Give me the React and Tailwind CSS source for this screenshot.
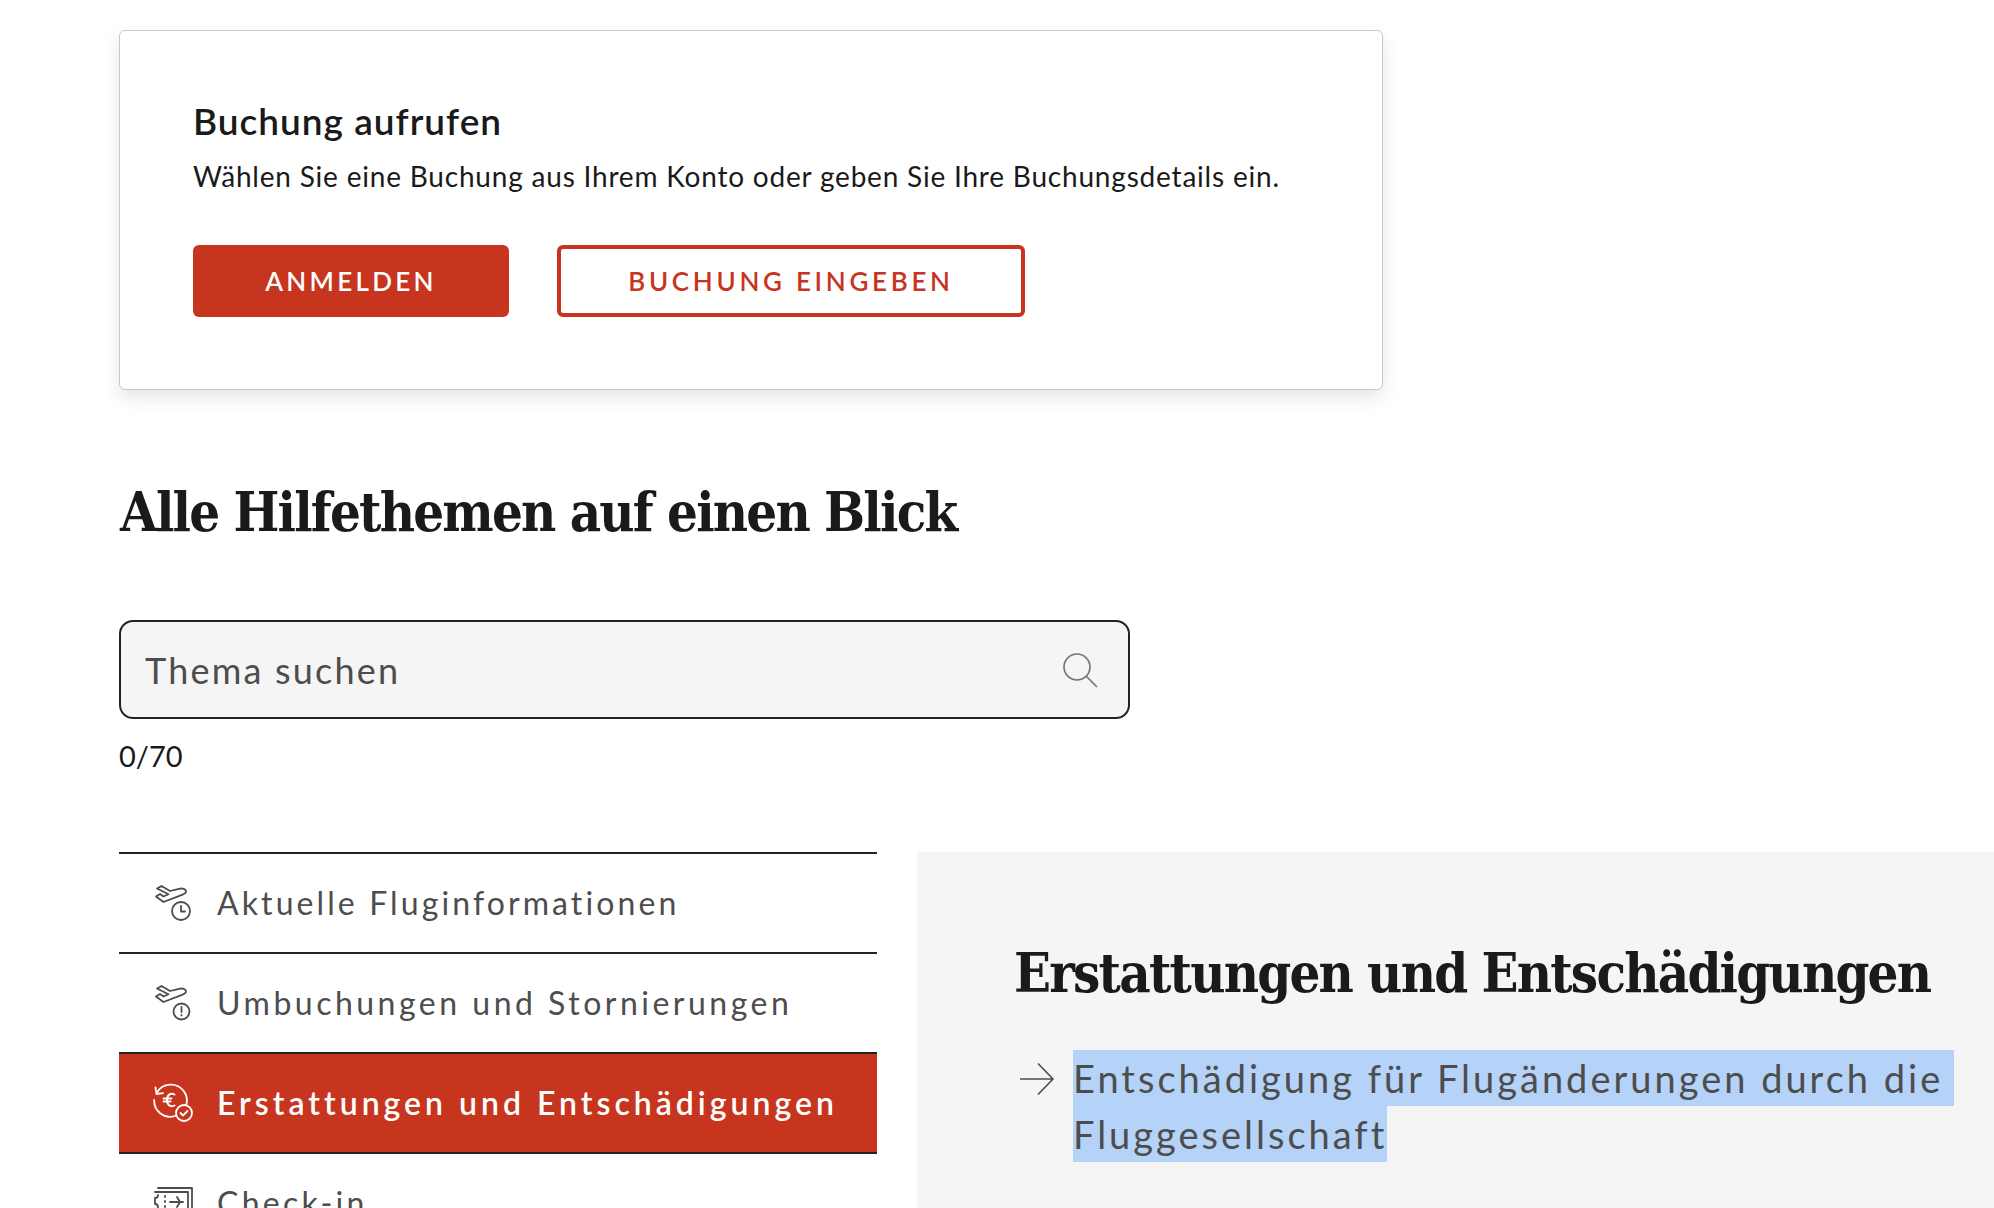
import React from "react";

const sans = "font-['Lato','Open_Sans',sans-serif]";
const serif = "font-['DejaVu_Serif_Condensed','DejaVu_Serif',serif]";

function PlaneShape() {
  return <path d="M3 13.500 7 11l3.500 2.500 5-2.200L4 5.500 8.500 3 17 8l9-2.200c3.500-.8 7 .2 7 2.600 0 1.700-1.800 2.600-4 3.400L10.500 19Z" />;
}

function ClockPlaneIcon() {
  return (
    <svg width="40" height="40" viewBox="0 0 40 40" fill="none" stroke="currentColor" strokeWidth="1.800" strokeLinejoin="round" strokeLinecap="round">
      <PlaneShape />
      <circle cx="28" cy="28" r="9" />
      <path d="M28 23v5.500h4" />
    </svg>
  );
}

function AlertPlaneIcon() {
  return (
    <svg width="40" height="40" viewBox="0 0 40 40" fill="none" stroke="currentColor" strokeWidth="1.800" strokeLinejoin="round" strokeLinecap="round">
      <PlaneShape />
      <circle cx="28.500" cy="28.500" r="8" />
      <path d="M28.500 24v5M28.500 32v.4" />
    </svg>
  );
}

function RefundIcon() {
  return (
    <svg width="40" height="40" viewBox="0 0 40 40" fill="none" stroke="currentColor" strokeWidth="1.800" strokeLinejoin="round" strokeLinecap="round">
      <path d="M4 9.500a16 16 0 1 1 18 23.500A16 16 0 0 1 1.200 17" />
      <path d="M2.500 4.500 3.500 11l6.500-.8" />
      <path d="M21.500 11.500c-4-2-7.500.5-7.500 5.500s3.500 7.500 7.500 5.500M10.500 15.500h8M10.500 18.500h7" strokeWidth="1.900" />
      <circle cx="31" cy="30" r="8" fill="#c7351f" />
      <path d="m27.500 30 2.500 2.500 4.500-4.500" />
    </svg>
  );
}

function TicketIcon() {
  return (
    <svg width="40" height="40" viewBox="0 0 40 40" fill="none" stroke="currentColor" strokeWidth="1.800" strokeLinejoin="round" strokeLinecap="round">
      <path d="M5 5h34v28M2 9h33v24H2v-6c2 0 3-1.500 3-3s-1-3-3-3v-6c2 0 3-1.500 3-3" />
      <path d="M12 13v1M12 18v1M12 23v1M17 19h13M24 14l3 5-3 5" />
    </svg>
  );
}

function SearchIcon() {
  return (
    <svg width="38" height="38" viewBox="0 0 38 38" fill="none" stroke="#777777" strokeWidth="1.700" strokeLinecap="round">
      <circle cx="16" cy="16" r="13" />
      <path d="m25.500 25.500 10 10" />
    </svg>
  );
}

const topics = [
  { label: "Aktuelle Fluginformationen", icon: <ClockPlaneIcon />, style: "tracking-[3.100px] text-[#4d4d4d]" },
  { label: "Umbuchungen und Stornierungen", icon: <AlertPlaneIcon />, style: "tracking-[3.500px] text-[#4d4d4d]" },
  {
    label: "Erstattungen und Entschädigungen",
    icon: <RefundIcon />,
    style: "bg-[#c7351f] font-semibold tracking-[4px] text-white",
  },
  { label: "Check-in", icon: <TicketIcon />, style: "tracking-[3.300px] text-[#4d4d4d]" },
];

function TopicRow({ topic }) {
  return (
    <div className={"flex h-[100px] items-center gap-[24px] border-t-2 border-[#222222] pl-[34px] text-[32px] " + topic.style}>
      {topic.icon}
      <span>{topic.label}</span>
    </div>
  );
}

export default function App() {
  return (
    <div className={"h-[1208px] overflow-hidden bg-white pt-[30px] pl-[119px] text-[#1a1a1a] " + sans}>
      {/* Booking card */}
      <section className="h-[360px] w-[1264px] rounded-md border border-[#c8c8c8] bg-white px-[73px] pt-[68px] shadow-[0_8px_18px_rgba(0,0,0,0.1)]">
        <h2 className="text-[37px] leading-[44px] font-semibold tracking-[1px]">Buchung aufrufen</h2>
        <p className="mt-[15px] text-[28px] leading-[36px] tracking-[0.8px]">
          Wählen Sie eine Buchung aus Ihrem Konto oder geben Sie Ihre Buchungsdetails ein.
        </p>
        <div className="mt-[51px] flex gap-[48px]">
          <button className="flex h-[72px] w-[316px] items-center justify-center rounded-md bg-[#c7351f] text-[26px] font-semibold tracking-[3.300px] text-white">
            ANMELDEN
          </button>
          <button className="flex h-[72px] w-[468px] items-center justify-center rounded-md border-4 border-[#c7351f] bg-white text-[26px] font-semibold tracking-[3.700px] text-[#c7351f]">
            BUCHUNG EINGEBEN
          </button>
        </div>
      </section>

      <h1 className={"mt-[87px] pl-px text-[54px] leading-[70px] font-bold tracking-[-1.800px] " + serif}>Alle Hilfethemen auf einen Blick</h1>

      {/* Search */}
      <div className="mt-[73px] flex h-[99px] w-[1011px] items-center justify-between rounded-[14px] border-2 border-[#222222] bg-[#f5f5f5] pr-[29px] pl-[24px]">
        <span className="text-[36px] tracking-[2.200px] text-[#4d4d4d]">Thema suchen</span>
        <SearchIcon />
      </div>
      <div className="mt-[20px] text-[29px] leading-[34px]">0/70</div>

      {/* Topics */}
      <div className="mt-[79px] flex items-start gap-[40px]">
        <div className="w-[758px] shrink-0">
          {topics.map((topic) => (
            <TopicRow key={topic.label} topic={topic} />
          ))}
        </div>
        <div className="h-[400px] flex-1 bg-[#f5f5f5] pt-[86px] pl-[97px]">
          <h2 className={"text-[54px] leading-[70px] font-bold tracking-[-1.800px] whitespace-nowrap " + serif}>Erstattungen und Entschädigungen</h2>
          <div className="mt-[42px] flex gap-[18px]">
            <svg width="36" height="34" viewBox="0 0 36 34" fill="none" stroke="#4d4d4d" strokeWidth="1.600" className="mt-[12px] ml-[5px] shrink-0">
              <path d="M1 17h33M19 1.500 34 17 19 32.500" />
            </svg>
            <div className="text-[38px] leading-[56px] tracking-[3px] text-[#4d4d4d]">
              <span className="block w-[881px] bg-[#b5d2f8] whitespace-nowrap">Entschädigung für Flugänderungen durch die</span>
              <span className="block w-fit bg-[#b5d2f8]">Fluggesellschaft</span>
            </div>
          </div>
        </div>
      </div>
    </div>
  );
}
